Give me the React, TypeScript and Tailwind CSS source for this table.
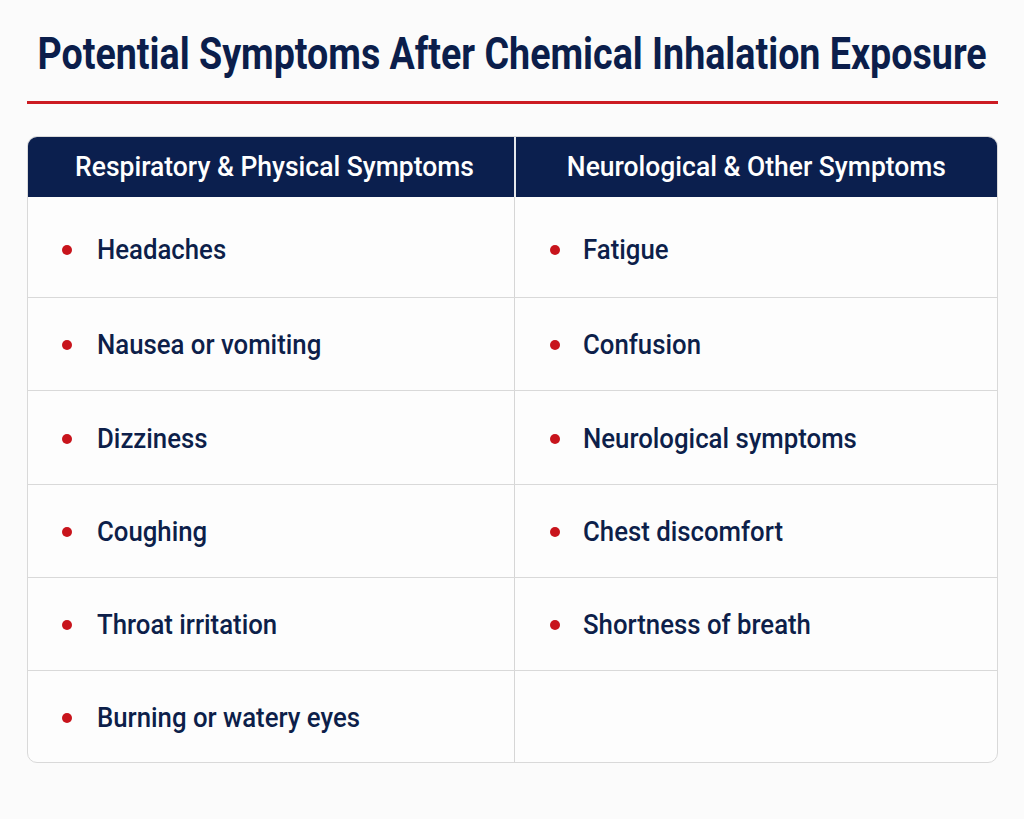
import React from 'react';

const left = ['Headaches', 'Nausea or vomiting', 'Dizziness', 'Coughing', 'Throat irritation', 'Burning or watery eyes'];
const right = ['Fatigue', 'Confusion', 'Neurological symptoms', 'Chest discomfort', 'Shortness of breath', ''];
const heights = ['h-[100px]', 'h-[93px]', 'h-[94px]', 'h-[93px]', 'h-[93px]', 'h-[92px]'];

const Cell = ({ text, first, top }: { text: string; first: boolean; top: boolean }) => (
  <div className={`flex items-center ${top ? 'pt-[5px]' : 'pt-[2px]'} ${first ? 'pl-[34px]' : 'pl-[35px] border-l border-[#d6d6d6]'}`}>
    {text && (
      <>
        <span className="h-[10px] w-[10px] shrink-0 rounded-full bg-[#c8141c]" />
        <span className={`${first ? 'ml-[25px]' : 'ml-[23px]'} inline-block origin-left scale-x-[0.92] whitespace-nowrap text-[28px] font-medium text-[#0d1f4a]`}>
          {text}
        </span>
      </>
    )}
  </div>
);

export default function App() {
  return (
    <div className="min-h-[819px] w-[1024px] overflow-hidden bg-[#fbfbfb] font-['Roboto',sans-serif]">
      <div className="px-[27px] pt-[28px]">
        <div className="flex justify-center">
          <h1 className="inline-block shrink-0 origin-center scale-x-[0.855] whitespace-nowrap text-[44px] font-bold leading-[52px] text-[#0b1e4b]">
            Potential Symptoms After Chemical Inhalation Exposure
          </h1>
        </div>
        <div className="mt-[21px] h-[3px] w-[971px] bg-[#cc1b22]" />

        <div className="mt-[32px] w-[971px] overflow-hidden rounded-[10px] border border-[#d9d9d9] bg-[#fdfdfd]">
          <div className="grid grid-cols-[486px_1fr] bg-[#0b1f4e] text-white">
            <div className="flex h-[60px] items-center justify-center pl-[6px]">
              <span className="inline-block shrink-0 scale-x-[0.98] whitespace-nowrap text-[27px] font-medium">
                Respiratory &amp; Physical Symptoms
              </span>
            </div>
            <div className="flex h-[60px] items-center justify-center border-l-2 border-[#e5e7eb]">
              <span className="inline-block shrink-0 scale-x-[0.98] whitespace-nowrap text-[27px] font-medium">
                Neurological &amp; Other Symptoms
              </span>
            </div>
          </div>
          {left.map((l, i) => (
            <div key={l} className={`grid grid-cols-[486px_1fr] ${heights[i]} ${i > 0 ? 'border-t border-[#d9d9d9]' : ''}`}>
              <Cell text={l} first top={i === 0} />
              <Cell text={right[i]} first={false} top={i === 0} />
            </div>
          ))}
        </div>
      </div>
    </div>
  );
}
